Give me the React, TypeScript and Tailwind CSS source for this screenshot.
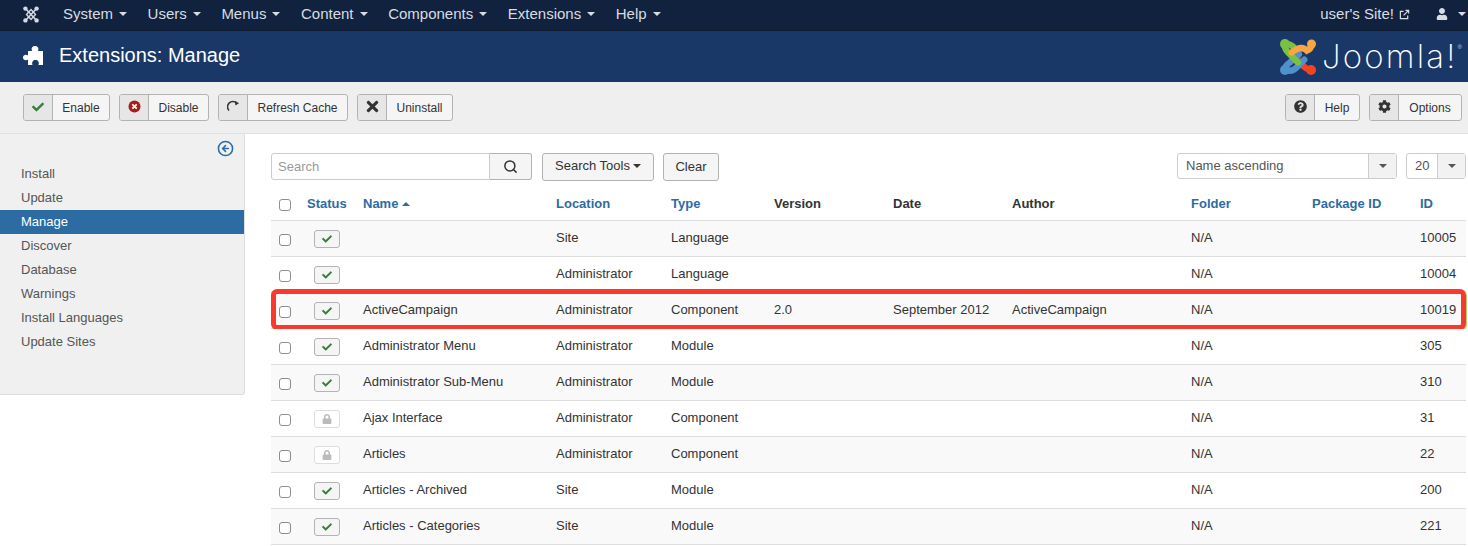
import type { ReactNode } from "react";
import { FaCheck, FaCog, FaLock, FaQuestionCircle, FaTimes, FaUser } from "react-icons/fa";
import { CircleArrowLeft, Search } from "lucide-react";

const menus = ["System", "Users", "Menus", "Content", "Components", "Extensions", "Help"];
const sideLinks = ["Install", "Update", "Manage", "Discover", "Database", "Warnings", "Install Languages", "Update Sites"];

const rows = [
  { name: "", location: "Site", type: "Language", id: "10005" },
  { name: "", location: "Administrator", type: "Language", id: "10004" },
  { name: "ActiveCampaign", location: "Administrator", type: "Component", version: "2.0", date: "September 2012", author: "ActiveCampaign", id: "10019", marked: true },
  { name: "Administrator Menu", location: "Administrator", type: "Module", id: "305" },
  { name: "Administrator Sub-Menu", location: "Administrator", type: "Module", id: "310" },
  { name: "Ajax Interface", location: "Administrator", type: "Component", id: "31", locked: true },
  { name: "Articles", location: "Administrator", type: "Component", id: "22", locked: true },
  { name: "Articles - Archived", location: "Site", type: "Module", id: "200" },
  { name: "Articles - Categories", location: "Site", type: "Module", id: "221" },
];

function Caret({ className = "border-t-[#333]" }: { className?: string }) {
  return <span className={`inline-block w-0 h-0 border-x-4 border-x-transparent border-t-4 ${className}`} />;
}

function JoomlaLogo() {
  return (
    <svg width="36" height="36" viewBox="0 0 40 40" fill="none" strokeLinecap="round">
      <g strokeWidth="7">
        <path d="M34.5 34.5 Q28 33 25 29 L17 20 Q16 17 21 13" stroke="#f44321" />
        <path d="M5 34.5 Q6 29 11 26 L21 17" stroke="#5091cd" />
        <path d="M5 34.5 Q14 37 19 31 L27 23" stroke="#5091cd" />
        <path d="M5 5.5 Q5 11 9 15 L20 26" stroke="#7ac143" />
        <path d="M5 5.5 Q11 5 15 9" stroke="#7ac143" />
        <path d="M35 5.5 Q35 11 30 13 Q24 6 13 15" stroke="#f9a541" />
      </g>
      <circle cx="5.5" cy="5.5" r="5.5" fill="#7ac143" />
      <circle cx="35" cy="5.5" r="5" fill="#f9a541" />
      <circle cx="34.5" cy="34.5" r="5.5" fill="#f44321" />
      <circle cx="5.5" cy="34.5" r="5.5" fill="#5091cd" />
    </svg>
  );
}

function JoomlaNavIcon() {
  return (
    <svg width="16" height="17" viewBox="0 0 16 17" fill="none" stroke="#d5d9e0">
      <path d="M2.5 2.5 L13.5 14.5 M13.5 2.5 L2.5 14.5" strokeWidth="1.6" />
      <path d="M8 3.5 L12.5 8.5 L8 13.5 L3.5 8.5 Z" strokeWidth="1.4" />
      <g fill="#d5d9e0" stroke="none">
        <circle cx="2.4" cy="2.6" r="2.2" />
        <circle cx="13.6" cy="2.6" r="2.2" />
        <circle cx="2.4" cy="14.4" r="2.2" />
        <circle cx="13.6" cy="14.4" r="2.2" />
      </g>
    </svg>
  );
}

function ToolButton({ icon, label, width }: { icon: ReactNode; label: string; width: string }) {
  return (
    <button className={`flex h-[27px] ${width} rounded-[3px] border border-[#b3b3b3] bg-[#f5f5f5] text-[12px] text-[#333] overflow-hidden`}>
      <span className="flex h-full w-[29px] shrink-0 items-center justify-center border-r border-[#b3b3b3] bg-[#e6e6e6] pb-[2px]">{icon}</span>
      <span className="flex-1 text-center leading-[27px]">{label}</span>
    </button>
  );
}

function Checkbox() {
  return <span className="block h-[12px] w-[12px] rounded-[3px] border border-[#8f8f8f] bg-white" />;
}

function Status({ locked }: { locked?: boolean }) {
  return (
    <span className={`flex h-[18px] w-[26px] items-center justify-center rounded-[3px] border ${locked ? "border-[#ddd] bg-white" : "border-[#b3b3b3] bg-[#f5f5f5]"}`}>
      {locked ? <FaLock className="text-[10px] text-[#bbb]" /> : <FaCheck className="text-[10px] text-[#378137]" />}
    </span>
  );
}

const grid = "grid grid-cols-[36px_56px_193px_115px_103px_119px_119px_179px_121px_108px_46px] items-center";

export default function App() {
  return (
    <div className="h-[546px] w-[1468px] overflow-hidden bg-white font-['Liberation_Sans',Arial,sans-serif] text-[13px] text-[#333]">
      <nav className="flex h-[30px] items-center bg-[#10223e] pb-[2px] text-[15px] text-[#d9dce2]">
        <span className="ml-[23px] mr-[24px] flex pt-[1px]">
          <JoomlaNavIcon />
        </span>
        <div className="flex gap-[20.6px]">
          {menus.map((m) => (
            <span key={m} className="flex items-center gap-[6px]">
              {m} <Caret className="border-t-[#d9dce2]" />
            </span>
          ))}
        </div>
        <div className="ml-auto flex items-center">
          <span>user's Site!</span>
          <svg width="11" height="11" viewBox="0 0 12 12" fill="none" stroke="#d9dce2" strokeWidth="1.3" className="ml-[5px]">
            <path d="M5 2.5 H1.5 V10.5 H9.5 V7" />
            <path d="M5 7 L10.5 1.5 M7 1.5 H10.5 V5" />
          </svg>
          <FaUser className="ml-[26px] text-[12px] text-[#d9dce2]" />
          <span className="ml-[10px] mr-[2px] flex">
            <Caret className="border-t-[#d9dce2]" />
          </span>
        </div>
      </nav>

      <header className="flex h-[52px] items-center border-t border-[#0d1c33] bg-[#1a3867]">
        <span className="mb-[3px] ml-[23px] flex">
          <svg width="21" height="21" viewBox="0 0 21 21" fill="#fff">
            <path d="M9 6 C8 3.5 9 1 12 1 C15 1 16 3.5 15 6 H20 V20 H15.5 C16.5 17 15 15 12.5 15 C10 15 8.5 17 9.5 20 H5 V14.5 C3 16 0 15 0 12.5 C0 10 3 9 5 10.5 V6 Z" />
          </svg>
        </span>
        <h1 className="mb-[3px] ml-[15px] text-[20px] text-white">Extensions: Manage</h1>
        <div className="ml-auto mr-[6px] flex items-center">
          <JoomlaLogo />
          <span className="ml-[6px] font-['Inter',sans-serif] text-[33px] font-extralight leading-none tracking-[2.2px] text-white">Joomla!</span>
          <span className="mb-[18px] text-[6px] text-[#cfd6e2]">®</span>
        </div>
      </header>

      <div className="flex h-[52px] items-center border-b border-[#e1e1e1] bg-[#efefef] pl-[23px] pr-[6px]">
        <div className="flex gap-[9px]">
          <ToolButton width="w-[87px]" label="Enable" icon={<FaCheck className="text-[12px] text-[#378137]" />} />
          <ToolButton
            width="w-[90px]"
            label="Disable"
            icon={
              <svg width="13" height="13" viewBox="0 0 13 13">
                <circle cx="6.5" cy="6.5" r="6" fill="#a51f18" />
                <path d="M4.3 4.3 L8.7 8.7 M8.7 4.3 L4.3 8.7" stroke="#fff" strokeWidth="1.8" />
              </svg>
            }
          />
          <ToolButton
            width="w-[130px]"
            label="Refresh Cache"
            icon={
              <svg width="13" height="13" viewBox="0 0 13 13" fill="none">
                <path d="M2 10.5 A5 5 0 0 1 9.5 3.2" stroke="#333" strokeWidth="1.5" />
                <path d="M8 0.8 L12 3.2 L8.4 5.6 Z" fill="#333" />
              </svg>
            }
          />
          <ToolButton width="w-[96px]" label="Uninstall" icon={<FaTimes className="text-[17px] text-[#333]" />} />
        </div>
        <div className="ml-auto flex gap-[9px]">
          <ToolButton width="w-[75px]" label="Help" icon={<FaQuestionCircle className="text-[13px] text-[#333]" />} />
          <ToolButton width="w-[93px]" label="Options" icon={<FaCog className="text-[13px] text-[#333]" />} />
        </div>
      </div>

      <div className="flex">
        <aside className="h-[261px] w-[245px] shrink-0 rounded-br-[3px] border-r border-b border-[#ddd] bg-[#f0f0f0]">
          <div className="flex h-[28px] items-center justify-end pr-[10px]">
            <CircleArrowLeft size={17} strokeWidth={2.2} className="text-[#2d6ca2]" />
          </div>
          <ul>
            {sideLinks.map((l) => (
              <li key={l} className={`h-[24px] pl-[21px] leading-[24px] ${l === "Manage" ? "bg-[#2d6ca2] text-white" : "text-[#555]"}`}>
                {l}
              </li>
            ))}
          </ul>
        </aside>

        <main className="ml-[26px] w-[1195px] pt-[19px]">
          <div className="flex h-[28px] items-start">
            <div className="flex h-[27px] w-[219px] items-center rounded-l-[3px] border border-[#ccc] pl-[6px] text-[#999]">Search</div>
            <button className="flex h-[27px] w-[42px] items-center justify-center rounded-r-[3px] border border-l-0 border-[#b3b3b3] bg-[#f5f5f5]">
              <Search size={15} strokeWidth={2.4} className="text-[#333]" />
            </button>
            <button className="ml-[10px] flex h-[28px] w-[112px] items-center justify-center gap-[3px] rounded-[3px] border border-[#b3b3b3] bg-[#f5f5f5] pb-[2px]">
              Search Tools <Caret />
            </button>
            <button className="ml-[9px] h-[28px] w-[56px] rounded-[3px] border border-[#b3b3b3] bg-[#f5f5f5]">Clear</button>
            <div className="ml-auto flex gap-[9px]">
              <div className="flex h-[26px] w-[220px] items-center rounded-[3px] border border-[#ccc]">
                <span className="flex-1 pl-[8px] text-[#555]">Name ascending</span>
                <span className="flex h-full w-[28px] items-center justify-center border-l border-[#ccc] bg-[#f2f2f2]">
                  <Caret className="border-t-[#555]" />
                </span>
              </div>
              <div className="flex h-[26px] w-[60px] items-center rounded-[3px] border border-[#ccc]">
                <span className="flex-1 pl-[8px] text-[#555]">20</span>
                <span className="flex h-full w-[28px] items-center justify-center border-l border-[#ccc] bg-[#f2f2f2]">
                  <Caret className="border-t-[#555]" />
                </span>
              </div>
            </div>
          </div>

          <div className={`${grid} mt-[4px] h-[36px] border-b border-[#ddd] pt-[2px] font-bold text-[#2d6ca2]`}>
            <span className="pl-[8px] pt-[2px]">
              <Checkbox />
            </span>
            <span>Status</span>
            <span className="flex items-center gap-[4px]">
              Name <span className="h-0 w-0 border-x-4 border-b-4 border-x-transparent border-b-[#2d6ca2]" />
            </span>
            <span>Location</span>
            <span>Type</span>
            <span className="text-[#333]">Version</span>
            <span className="text-[#333]">Date</span>
            <span className="text-[#333]">Author</span>
            <span>Folder</span>
            <span>Package ID</span>
            <span>ID</span>
          </div>

          {rows.map((r, i) => (
            <div key={r.id} className={`${grid} relative h-[36px] border-b border-[#ddd] pb-[2px] ${i % 2 === 0 ? "bg-[#f9f9f9]" : "bg-white"}`}>
              <span className="pl-[8px] pt-[4px]">
                <Checkbox />
              </span>
              <span className="pl-[7px] pt-[2px]">
                <Status locked={r.locked} />
              </span>
              <span>{r.name}</span>
              <span>{r.location}</span>
              <span>{r.type}</span>
              <span>{r.version}</span>
              <span>{r.date}</span>
              <span>{r.author}</span>
              <span>N/A</span>
              <span />
              <span>{r.id}</span>
              {r.marked && (
                <span className="absolute left-0 -top-[4px] h-[41px] w-[1195px] rounded-[6px] border-[5px] border-[#f9392e] shadow-[1px_1px_1px_#9ed36a] blur-[0.4px]" />
              )}
            </div>
          ))}
        </main>
      </div>
    </div>
  );
}
